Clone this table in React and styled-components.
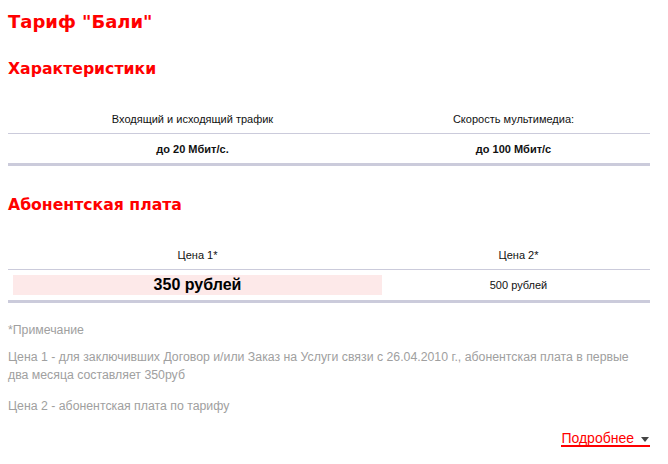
import React from "react";
import styled, { createGlobalStyle } from "styled-components";

const GlobalStyle = createGlobalStyle`
  html, body {
    margin: 0;
    padding: 0;
    background: #fff;
  }
  body {
    font-family: "Liberation Sans", Arial, sans-serif;
  }
`;

const Page = styled.div`
  width: 642px;
  margin-left: 8px;
  padding-top: 11px;
`;

const Title = styled.h1`
  margin: 0;
  font-family: "DejaVu Sans", Verdana, sans-serif;
  font-size: 18px;
  line-height: 22px;
  font-weight: bold;
  color: #ff0000;
`;

const Heading = styled.h2`
  margin: ${(p) => p.$top}px 0 0;
  font-family: "DejaVu Sans", Verdana, sans-serif;
  font-size: 15.7px;
  line-height: 20px;
  font-weight: bold;
  color: #ff0000;
`;

const Table = styled.table`
  width: 100%;
  margin-top: 26px;
  border-collapse: collapse;
  table-layout: fixed;
  border-bottom: 3px solid #cbcbdb;
`;

const HeadCell = styled.th`
  height: 28px;
  padding: 0;
  font-size: 11px;
  font-weight: normal;
  color: #111;
  text-align: center;
  border-bottom: 1px solid #cbcbdb;
`;

const ValueCell = styled.td`
  height: ${(p) => p.$h || 29}px;
  padding: 0;
  font-size: 11px;
  font-weight: ${(p) => (p.$bold ? "bold" : "normal")};
  color: #111;
  text-align: center;
`;

const PriceBox = styled.div`
  margin: 5px;
  height: 20px;
  line-height: 20px;
  background: #fde9e9;
  font-size: 16px;
  font-weight: bold;
  color: #000;
`;

const Notes = styled.div`
  margin-top: 18px;
  padding-right: 10px;
`;

const Note = styled.p`
  margin: 0 0 ${(p) => p.$after}px;
  font-size: 12.3px;
  line-height: 18px;
  color: #a0a0a0;
`;

const MoreRow = styled.div`
  display: flex;
  justify-content: flex-end;
  margin-top: 17px;
`;

const MoreLink = styled.a`
  display: inline-flex;
  align-items: center;
  gap: 7px;
  font-size: 14px;
  line-height: 13px;
  color: #ff0000;
  text-decoration: none;
  border-bottom: 2px solid #ff0000;
  cursor: pointer;
`;

const Arrow = styled.span`
  width: 0;
  height: 0;
  margin-top: 1px;
  margin-right: 1px;
  border-left: 4.5px solid transparent;
  border-right: 4.5px solid transparent;
  border-top: 5px solid #444;
`;

const App = () => {
  return (
    <Page>
      <GlobalStyle />
      <Title>Тариф "Бали"</Title>

      <Heading $top={26}>Характеристики</Heading>
      <Table>
        <colgroup>
          <col style={{ width: 369 }} />
          <col />
        </colgroup>
        <thead>
          <tr>
            <HeadCell>Входящий и исходящий трафик</HeadCell>
            <HeadCell>Скорость мультимедиа:</HeadCell>
          </tr>
        </thead>
        <tbody>
          <tr>
            <ValueCell $bold>до 20 Мбит/с.</ValueCell>
            <ValueCell $bold>до 100 Мбит/с</ValueCell>
          </tr>
        </tbody>
      </Table>

      <Heading $top={29}>Абонентская плата</Heading>
      <Table>
        <colgroup>
          <col style={{ width: 379 }} />
          <col />
        </colgroup>
        <thead>
          <tr>
            <HeadCell>Цена 1*</HeadCell>
            <HeadCell>Цена 2*</HeadCell>
          </tr>
        </thead>
        <tbody>
          <tr>
            <ValueCell $h={30}>
              <PriceBox>350 рублей</PriceBox>
            </ValueCell>
            <ValueCell $h={30}>500 рублей</ValueCell>
          </tr>
        </tbody>
      </Table>

      <Notes>
        <Note $after={9}>*Примечание</Note>
        <Note $after={13}>
          Цена 1 - для заключивших Договор и/или Заказ на Услуги связи с
          26.04.2010 г., абонентская плата в первые два месяца составляет
          350руб
        </Note>
        <Note $after={0}>Цена 2 - абонентская плата по тарифу</Note>
      </Notes>

      <MoreRow>
        <MoreLink>
          Подробнее
          <Arrow />
        </MoreLink>
      </MoreRow>
    </Page>
  );
};

export default App;
